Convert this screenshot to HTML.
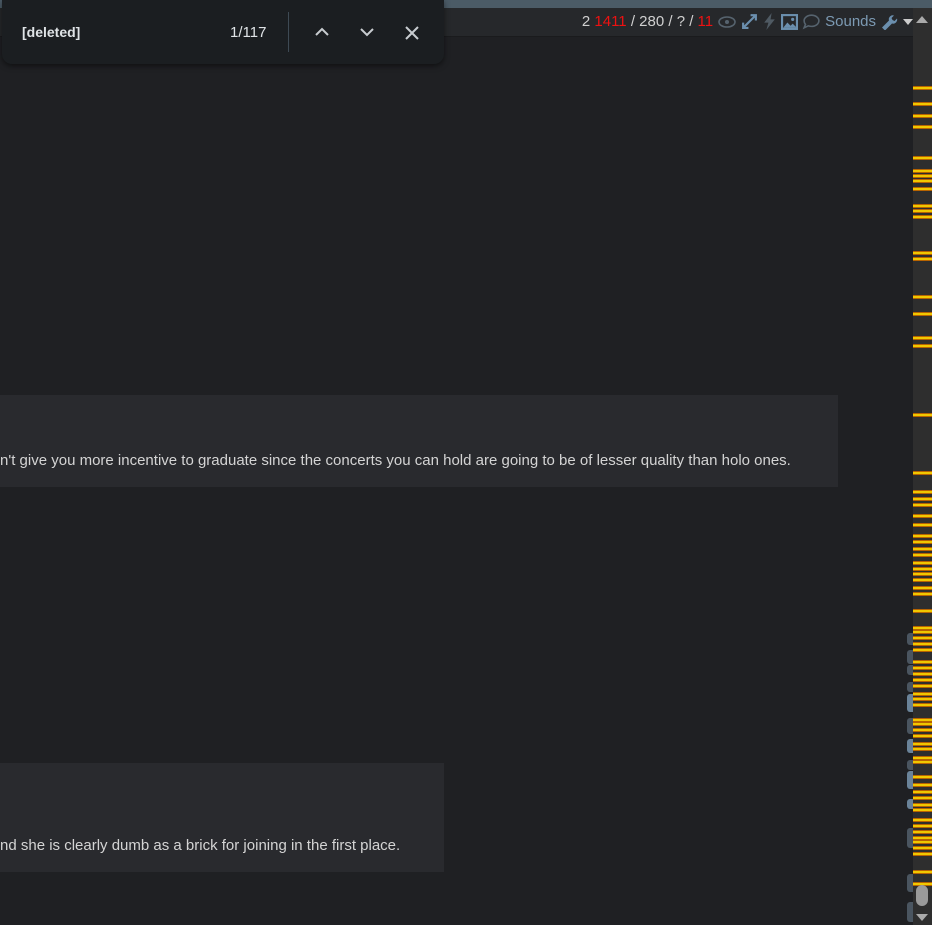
<!DOCTYPE html>
<html><head><style>
body{margin:0;width:932px;height:925px;background:#1f2023;overflow:hidden;position:relative;font-family:"Liberation Sans",sans-serif}
.top{position:absolute;left:0;top:0;width:932px;height:8px;background:#4b5b66}
.hdr{position:absolute;left:0;top:8px;width:913px;height:28px;background:#26282b;border-bottom:1px solid #1a1b1d}
.stats{position:absolute;right:18px;top:13px;font-size:15px;color:#d0d0d0;white-space:nowrap;display:flex;align-items:center;gap:4px}
.r{color:#e11}
.sb{position:absolute;left:913px;top:8px;width:19px;height:917px;background:#2e2e2e}
.m{position:absolute;left:913px;width:19px;height:2px;background:#f0c800;border-top:1px solid #b86400;border-bottom:1px solid #b86400}
.find{position:absolute;left:2px;top:0;width:442px;height:64px;background:#1b1e21;border-radius:0 0 10px 10px;box-shadow:0 2px 6px rgba(0,0,0,.5);color:#dfe3e6}
.box{position:absolute;background:#292a2e;color:#d4d4d4;font-size:15px}
.tab{position:absolute;left:907px;width:6px;border-radius:3px 0 0 3px;background:#4a5560}
</style></head><body>
<div class="top"></div>
<div class="hdr"></div>
<div class="stats"><span>2 <span class="r">1411</span> / 280 / ? / <span class="r">11</span></span>
<svg width="20" height="14" viewBox="0 0 18 14"><ellipse cx="9" cy="7" rx="8" ry="5" fill="none" stroke="#56636e" stroke-width="1.6"/><circle cx="9" cy="7" r="2" fill="#56636e"/></svg>
<svg width="17" height="17" viewBox="0 0 16 16"><path d="M2 14L14 2M9 2h5v5M2 9v5h5" fill="none" stroke="#6b8fae" stroke-width="2"/></svg>
<svg width="15" height="17" viewBox="0 0 14 16"><path d="M9 0L2 9h4l-2 7 8-10H8z" fill="#4f5a63"/></svg>
<svg width="17" height="16" viewBox="0 0 16 15"><rect x="1" y="1" width="14" height="13" fill="none" stroke="#6b8fae" stroke-width="2"/><path d="M2 13l4-5 3 3 2-2 4 4z" fill="#6b8fae"/><circle cx="11" cy="5" r="1.5" fill="#6b8fae"/></svg>
<svg width="19" height="17" viewBox="0 0 18 16"><path d="M9 2c4 0 7 2.4 7 5.3S13 12.6 9 12.6c-1 0-2-.2-3-.5L2 14l1.3-3.3C2.5 9.8 2 8.6 2 7.3 2 4.4 5 2 9 2z" fill="none" stroke="#56636e" stroke-width="1.5"/></svg>
<span style="color:#7c9ab3">Sounds</span>
<svg width="18" height="17" viewBox="0 0 18 16"><path d="M2 14l7-7a4 4 0 015-5l-2.5 2.5 1 2 2 1L17 5a4 4 0 01-5 5l-7 7z" fill="#6b8fae"/></svg>
<svg width="12" height="8" viewBox="0 0 12 8"><path d="M1 1h10L6 7z" fill="#ccc"/></svg>
</div>
<div class="sb"></div>
<svg style="position:absolute;left:914px;top:14px" width="16" height="10"><path d="M2 9h12L8 2z" fill="#aaa"/></svg>
<svg style="position:absolute;left:914px;top:912px" width="16" height="10"><path d="M2 2h12L8 9z" fill="#aaa"/></svg>
<div class="find">
<div style="position:absolute;left:20px;top:24px;font-size:14px;font-weight:bold">[deleted]</div>
<div style="position:absolute;left:228px;top:24px;font-size:15px">1/117</div>
<div style="position:absolute;left:286px;top:12px;width:1px;height:40px;background:#3e4a54"></div>
<svg style="position:absolute;left:312px;top:25px" width="16" height="14"><path d="M2 10l6-6 6 6" fill="none" stroke="#c8ccd0" stroke-width="2"/></svg>
<svg style="position:absolute;left:357px;top:25px" width="16" height="14"><path d="M2 4l6 6 6-6" fill="none" stroke="#c8ccd0" stroke-width="2"/></svg>
<svg style="position:absolute;left:402px;top:25px" width="16" height="16"><path d="M2 2l12 12M14 2L2 14" fill="none" stroke="#c8ccd0" stroke-width="2"/></svg>
</div>
<div class="box" style="left:0;top:395px;width:838px;height:92px"><div style="position:absolute;left:0;top:57px;white-space:nowrap">n't give you more incentive to graduate since the concerts you can hold are going to be of lesser quality than holo ones.</div></div>
<div class="box" style="left:0;top:763px;width:444px;height:109px"><div style="position:absolute;left:0;top:74px;white-space:nowrap">nd she is clearly dumb as a brick for joining in the first place.</div></div>
<div class="m" style="top:86px"></div><div class="m" style="top:102px"></div><div class="m" style="top:114px"></div><div class="m" style="top:125px"></div><div class="m" style="top:156px"></div><div class="m" style="top:169px"></div><div class="m" style="top:174px"></div><div class="m" style="top:179px"></div><div class="m" style="top:187px"></div><div class="m" style="top:204px"></div><div class="m" style="top:209px"></div><div class="m" style="top:215px"></div><div class="m" style="top:251px"></div><div class="m" style="top:257px"></div><div class="m" style="top:295px"></div><div class="m" style="top:312px"></div><div class="m" style="top:336px"></div><div class="m" style="top:344px"></div><div class="m" style="top:413px"></div><div class="m" style="top:471px"></div><div class="m" style="top:490px"></div><div class="m" style="top:497px"></div><div class="m" style="top:503px"></div><div class="m" style="top:514px"></div><div class="m" style="top:523px"></div><div class="m" style="top:534px"></div><div class="m" style="top:540px"></div><div class="m" style="top:547px"></div><div class="m" style="top:553px"></div><div class="m" style="top:561px"></div><div class="m" style="top:567px"></div><div class="m" style="top:572px"></div><div class="m" style="top:578px"></div><div class="m" style="top:586px"></div><div class="m" style="top:592px"></div><div class="m" style="top:609px"></div><div class="m" style="top:626px"></div><div class="m" style="top:630px"></div><div class="m" style="top:636px"></div><div class="m" style="top:642px"></div><div class="m" style="top:648px"></div><div class="m" style="top:660px"></div><div class="m" style="top:666px"></div><div class="m" style="top:672px"></div><div class="m" style="top:678px"></div><div class="m" style="top:684px"></div><div class="m" style="top:692px"></div><div class="m" style="top:697px"></div><div class="m" style="top:703px"></div><div class="m" style="top:718px"></div><div class="m" style="top:722px"></div><div class="m" style="top:728px"></div><div class="m" style="top:734px"></div><div class="m" style="top:742px"></div><div class="m" style="top:747px"></div><div class="m" style="top:756px"></div><div class="m" style="top:760px"></div><div class="m" style="top:775px"></div><div class="m" style="top:783px"></div><div class="m" style="top:790px"></div><div class="m" style="top:796px"></div><div class="m" style="top:803px"></div><div class="m" style="top:808px"></div><div class="m" style="top:818px"></div><div class="m" style="top:824px"></div><div class="m" style="top:830px"></div><div class="m" style="top:836px"></div><div class="m" style="top:840px"></div><div class="m" style="top:846px"></div><div class="m" style="top:852px"></div><div class="m" style="top:870px"></div><div class="m" style="top:882px"></div>
<div style="position:absolute;left:916px;top:885px;width:12px;height:21px;border-radius:6px;background:#9a9a9a"></div>
<div class="tab" style="top:633px;height:12px"></div><div class="tab" style="top:650px;height:14px"></div><div class="tab" style="top:665px;height:10px"></div><div class="tab" style="top:682px;height:10px"></div><div class="tab" style="top:694px;height:18px;background:#6a8399"></div><div class="tab" style="top:718px;height:16px"></div><div class="tab" style="top:739px;height:14px;background:#6a8399"></div><div class="tab" style="top:760px;height:10px"></div><div class="tab" style="top:771px;height:18px;background:#6a8399"></div><div class="tab" style="top:799px;height:10px;background:#6a8399"></div><div class="tab" style="top:828px;height:20px"></div><div class="tab" style="top:874px;height:18px"></div><div class="tab" style="top:902px;height:20px"></div>
</body></html>
